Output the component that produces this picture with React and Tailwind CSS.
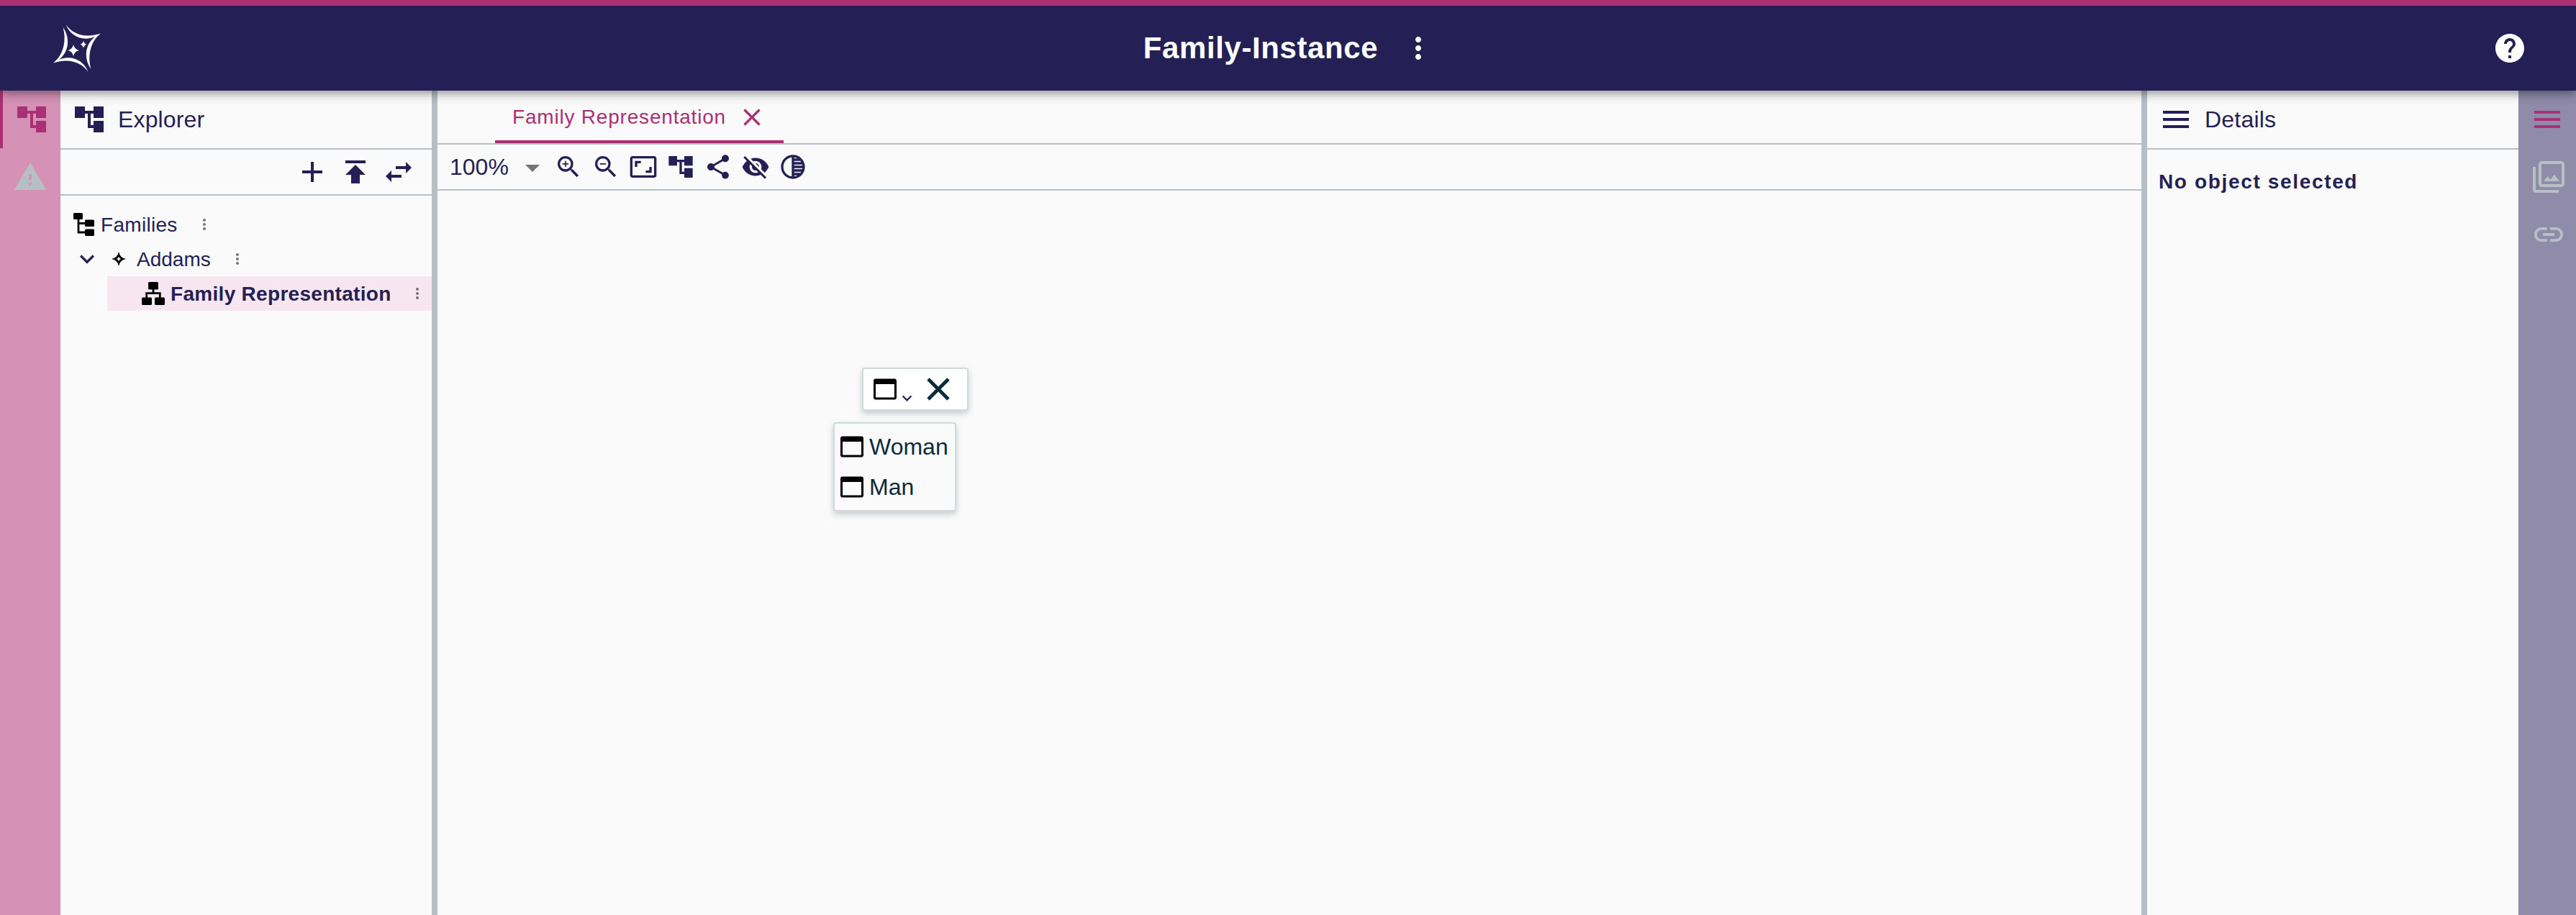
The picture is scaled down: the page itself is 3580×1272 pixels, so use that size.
import React from "react";
import {
  MdAccountTree, MdWarning, MdAdd, MdPublish, MdSwapHoriz, MdMoreVert, MdExpandMore, MdClose,
  MdZoomIn, MdZoomOut, MdAspectRatio, MdShare, MdVisibilityOff, MdTonality, MdHelp, MdMenu,
  MdLink, MdFilter, MdArrowDropDown,
} from "react-icons/md";

function Logo() {
  return (
    <svg viewBox="0 0 66 66" className="h-[66px] w-[66px]" fill="#fff">
      <path d="M17.500 0C24 10 40 21 66 12.500C50 25 48 46 52.500 62C42 47 44 28 58 17C42 24 24 17 17.500 0Z" />
      <path d="M48.500 66C42 56 26 45 0 53.500C16 41 18 20 13.500 4C24 19 22 38 8 49C24 42 42 49 48.500 66Z" />
      <path d="M28 28Q29.500 34.500 36 36Q29.500 37.500 28 44Q26.500 37.500 20.500 36Q26.500 34.500 28 28Z" />
      <path d="M42 22.500Q43 27 46.500 27.700Q43 28.500 42 32.800Q41 28.500 37.500 27.700Q41 27 42 22.500Z" />
    </svg>
  );
}

function TreeIcon() {
  return (
    <svg viewBox="0 0 32 32" className="h-8 w-8">
      <path d="M8 8v19h11M8 14.500h11" fill="none" stroke="#000" strokeWidth="2.800" />
      <rect x="1" width="13" height="9" rx="1.500" />
      <rect x="17" y="9.500" width="13" height="9.500" rx="1.500" />
      <rect x="17" y="22.500" width="13" height="9.500" rx="1.500" />
    </svg>
  );
}

function StarIcon() {
  return (
    <svg viewBox="0 0 20 20" className="h-5 w-5">
      <path fillRule="evenodd" d="M10 0Q11 4.500 13.300 6.700Q15.500 9 20 10Q15.500 11 13.300 13.300Q11 15.500 10 20Q9 15.500 6.700 13.300Q4.500 11 0 10Q4.500 9 6.700 6.700Q9 4.500 10 0ZM10 6.500L8.900 8.900L6.500 10L8.900 11.100L10 13.500L11.100 11.100L13.500 10L11.100 8.900Z" />
    </svg>
  );
}

function DiagramIcon() {
  return (
    <svg viewBox="0 0 32 32" className="h-8 w-8">
      <path d="M16 9v7M6.700 23v-7.300h18.600V23" fill="none" stroke="#000" strokeWidth="2.800" />
      <rect x="9" width="14" height="10.500" rx="1.500" />
      <rect y="21.500" width="14" height="10.500" rx="1.500" />
      <rect x="18" y="21.500" width="14" height="10.500" rx="1.500" />
    </svg>
  );
}

function WindowIcon() {
  return (
    <svg viewBox="0 0 32 32" className="h-8 w-8 shrink-0">
      <path fillRule="evenodd" d="M3 1.500h26a3 3 0 0 1 3 3v23a3 3 0 0 1-3 3H3a3 3 0 0 1-3-3v-23a3 3 0 0 1 3-3zM3 9v18.500h26V9z" />
    </svg>
  );
}

const tools = [MdZoomIn, MdZoomOut, MdAspectRatio, MdAccountTree, MdShare, MdVisibilityOff, MdTonality];

export default function App() {
  return (
    <div className="flex h-[1272px] w-[3580px] flex-col overflow-hidden bg-[#fafafa] font-['Liberation_Sans',sans-serif] text-[#241f55]">
      <header className="relative z-10 flex h-[126px] shrink-0 items-center border-t-8 border-[#ab2f73] bg-[#241f55] pr-[68px] pl-[74px] text-white shadow-[0_4px_8px_-2px_rgba(0,0,0,0.2),0_8px_10px_0_rgba(0,0,0,0.14),0_2px_20px_0_rgba(0,0,0,0.12)]">
        <div className="flex flex-1 items-center"><Logo /></div>
        <div className="flex items-center pr-[2px]">
          <h1 className="text-[42px] leading-none font-bold tracking-[0.6px] whitespace-nowrap">Family-Instance</h1>
          <MdMoreVert className="ml-8 h-12 w-12" />
        </div>
        <div className="flex flex-1 justify-end"><MdHelp className="h-12 w-12" /></div>
      </header>
      <div className="flex min-h-0 flex-1">
        <nav className="flex w-[84px] shrink-0 flex-col bg-[#d592b6]">
          <div className="flex h-20 items-center border-l-4 border-[#ab2f73] pl-4 text-[#ab2f73]"><MdAccountTree className="h-12 w-12" /></div>
          <div className="flex h-20 items-center justify-center text-[#b5bfc4]"><MdWarning className="h-12 w-12" /></div>
        </nav>
        <aside className="flex w-[516px] shrink-0 flex-col">
          <div className="flex h-[82px] items-center gap-4 border-b-2 border-[#b5bfc4] pl-4">
            <MdAccountTree className="h-12 w-12" />
            <span className="text-[32px] leading-none tracking-[0.15px]">Explorer</span>
          </div>
          <div className="flex h-16 items-center justify-end gap-3 border-b-2 border-[#b5bfc4] pr-[22px]">
            <MdAdd className="h-12 w-12" /><MdPublish className="h-12 w-12" /><MdSwapHoriz className="h-12 w-12" />
          </div>
          <div className="flex flex-col pt-4 text-[28px] leading-none">
            <div className="flex h-12 items-center pl-[17px]">
              <TreeIcon />
              <span className="ml-[7px] pt-[2px] tracking-[0.3px]">Families</span>
              <MdMoreVert className="ml-[25px] h-6 w-6 text-[#757575]" />
            </div>
            <div className="flex h-12 items-center pl-[17px]">
              <MdExpandMore className="h-10 w-10" />
              <div className="ml-[14px]"><StarIcon /></div>
              <span className="ml-[15px] pt-[2px]">Addams</span>
              <MdMoreVert className="ml-[25px] h-6 w-6 text-[#757575]" />
            </div>
            <div className="ml-[65px] flex h-12 items-center bg-[#f7e5ef] pr-2 pl-12">
              <DiagramIcon />
              <span className="ml-2 flex-1 pt-[2px] font-bold tracking-[0.3px] whitespace-nowrap">Family Representation</span>
              <MdMoreVert className="h-6 w-6 text-[#757575]" />
            </div>
          </div>
        </aside>
        <div className="w-2 shrink-0 bg-[#b5bfc4]" />
        <main className="flex flex-1 flex-col">
          <div className="flex h-[75px] border-b-2 border-[#b5bfc4] pl-20">
            <div className="flex w-[401px] items-center border-b-4 border-[#ab2f73] pt-1 pl-6 text-[#ab2f73]">
              <span className="w-[300px] text-[28px] leading-none tracking-[0.8px] whitespace-nowrap">Family Representation</span>
              <MdClose className="ml-[13px] h-10 w-10" />
            </div>
          </div>
          <div className="flex h-16 items-center border-b-2 border-[#b5bfc4] pl-[17px]">
            <span className="w-[91px] text-[32px] leading-none">100%</span>
            <MdArrowDropDown className="mt-[2px] h-12 w-12 text-[#757575]" />
            <div className="ml-[6px] flex gap-3">
              {tools.map((Icon, i) => <Icon key={i} className="h-10 w-10" />)}
            </div>
          </div>
          <div className="relative flex-1 text-[#0b2b3a]">
            <div className="absolute top-[246px] left-[590px] flex h-[60px] w-[148px] items-center rounded-[4px] border-2 border-[#d1dadb] bg-white pl-[14px] shadow-[0_4px_8px_0_rgba(38,70,83,0.25)]">
              <span className="text-black"><WindowIcon /></span>
              <MdExpandMore className="mt-6 ml-px h-[27px] w-[27px] text-[#261e58]" />
              <svg viewBox="0 0 32 32" className="ml-[14px] h-8 w-8"><path d="M2 2L30 30M30 2L2 30" stroke="#0b2b3a" strokeWidth="4.800" /></svg>
            </div>
            <div className="absolute top-[322px] left-[550px] flex h-[124px] w-[171px] flex-col rounded-[4px] border-2 border-[#d1dadb] bg-[#fafafa] pt-1 pl-2 text-[32px] leading-none shadow-[0_4px_8px_0_rgba(38,70,83,0.25)]">
              <div className="flex h-14 items-center gap-2"><WindowIcon />Woman</div>
              <div className="flex h-14 items-center gap-2"><WindowIcon />Man</div>
            </div>
          </div>
        </main>
        <div className="w-2 shrink-0 bg-[#b5bfc4]" />
        <aside className="w-[516px] shrink-0">
          <div className="flex h-[82px] items-center gap-4 border-b-2 border-[#b5bfc4] pl-4">
            <MdMenu className="h-12 w-12" />
            <span className="text-[32px] leading-none tracking-[0.2px]">Details</span>
          </div>
          <p className="px-4 pt-[30px] text-[28px] leading-[30px] font-bold tracking-[1.65px]">No object selected</p>
        </aside>
        <nav className="flex w-20 shrink-0 flex-col bg-[#8f8ba9] text-[#b5bfc4]">
          <div className="flex h-20 items-center pl-4 text-[#ab2f73]"><MdMenu className="h-12 w-12" /></div>
          <div className="flex h-20 items-center pl-[18px]"><MdFilter className="h-12 w-12" /></div>
          <div className="flex h-20 items-center pl-[18px]"><MdLink className="h-12 w-12" /></div>
        </nav>
      </div>
    </div>
  );
}
